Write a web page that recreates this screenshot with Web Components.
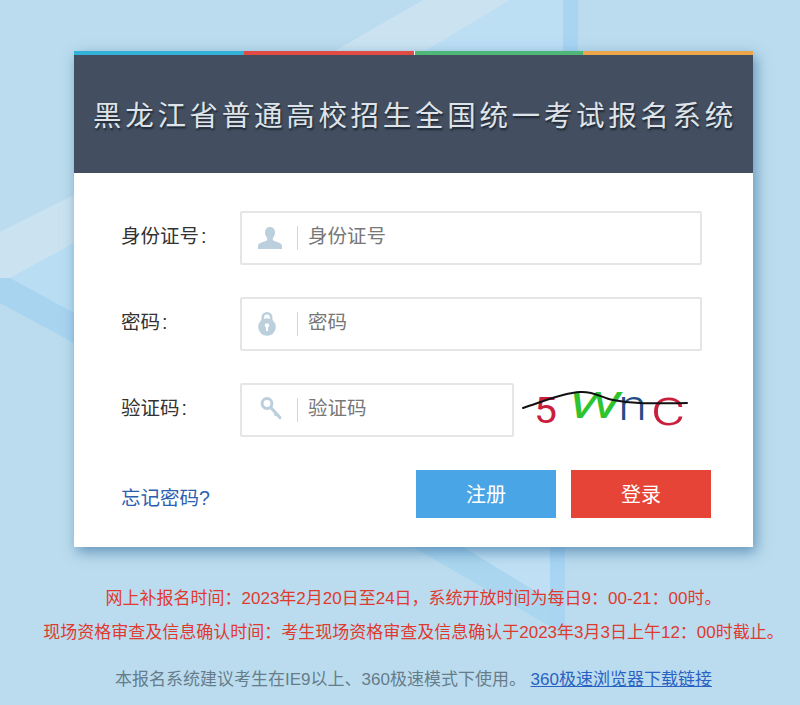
<!DOCTYPE html>
<html lang="zh">
<head>
<meta charset="utf-8">
<title>黑龙江省普通高校招生全国统一考试报名系统</title>
<style>
  html, body { margin: 0; height: 100%; }
  body {
    background: #bbdcee;
    font-family: "Liberation Sans", "Noto Sans CJK SC", sans-serif;
    overflow: hidden;
  }
</style>
</head>
<body>
<page-backdrop></page-backdrop>
<login-page>
  <login-card title-text="黑龙江省普通高校招生全国统一考试报名系统"></login-card>
  <notice-lines></notice-lines>
</login-page>

<script>
const ICONS = {
  user: `<svg width="26" height="26" viewBox="0 0 26 26"><path fill="#bccfdc" d="M13 2c3 0 5 2.200 5 5.400 0 2.400-1 4.400-2.200 5.500v1.500c0 1 1.200 1.600 3.600 2.300 3.200 1 5.600 2 5.600 4.300V24H1v-3c0-2.300 2.400-3.300 5.600-4.300 2.400-.7 3.600-1.300 3.600-2.300v-1.500C9 11.800 8 9.800 8 7.400 8 4.200 10 2 13 2z"/></svg>`,
  lock: `<svg width="26" height="26" viewBox="0 0 26 26"><path fill="none" stroke="#bccfdc" stroke-width="2.600" d="M5.800 12V6.500a4.200 4.200 0 0 1 8.400 0V12"/><circle cx="10" cy="16" r="8.800" fill="#bccfdc"/><circle cx="10" cy="14.500" r="2.200" fill="#fff"/><rect x="9" y="15" width="2" height="5" fill="#fff"/></svg>`,
  key: `<svg width="26" height="26" viewBox="0 0 26 26"><circle cx="10" cy="6.500" r="4.900" fill="none" stroke="#bccfdc" stroke-width="3"/><path fill="none" stroke="#bccfdc" stroke-width="3.200" stroke-linecap="round" d="M13.800 10.500l9 10"/><path fill="none" stroke="#bccfdc" stroke-width="2" d="M19.500 16.500l-2 2"/></svg>`
};

class PageBackdrop extends HTMLElement {
  constructor() {
    super();
    this.attachShadow({mode: "open"}).innerHTML = `
      <style>
        :host { position: absolute; inset: 0; z-index: -1; display: block; }
        svg { display: block; }
      </style>
      <svg width="800" height="705" viewBox="0 0 800 705">
        <defs>
          <linearGradient id="bar" x1="0" y1="0" x2="0" y2="1">
            <stop offset="0" stop-color="#a9d5f3"/>
            <stop offset=".8" stop-color="#a9d5f3"/>
            <stop offset="1" stop-color="#a9d5f3" stop-opacity="0"/>
          </linearGradient>
        </defs>
        <polygon fill="#bcdff4" points="510,0 563,0 563,52 423,52"/>
        <polygon fill="#cbe3f1" points="333,52 423,0 510,0 423,52"/>
        <polygon fill="#a9d5f3" points="563,0 578,0 578,52 563,52"/>
        <polygon fill="#cbe3f1" points="0,232 74,195 74,243 10,278 0,278"/>
        <polygon fill="#b9def3" points="10,278 74,243 74,313"/>
        <polygon fill="#a9d4ef" points="0,278 10,278 74,313 74,343 0,303"/>
        <polygon fill="#bfe0f4" points="463,547 550,547 550,600"/>
        <polygon fill="#aad6ef" points="413,547 463,547 550,600 565,610 565,635"/>
        <polygon fill="url(#bar)" points="550,547 565,547 565,640 550,625"/>
      </svg>`;
  }
}

class LoginPage extends HTMLElement {
  constructor() {
    super();
    this.attachShadow({mode: "open"}).innerHTML = `
      <style>
        :host { display: flex; flex-direction: column; padding: 51px 0 0 0; }
      </style>
      <slot></slot>`;
  }
}

class LoginCard extends HTMLElement {
  constructor() {
    super();
    const title = this.getAttribute("title-text");
    this.attachShadow({mode: "open"}).innerHTML = `
      <style>
        :host {
          display: block;
          width: 679px;
          margin-left: 74px;
          background: #fff;
          box-shadow: 3px 5px 13px rgba(40, 100, 150, .6);
        }
        .stripe { display: flex; height: 4px; }
        .stripe i { flex: 1; }
        .stripe i:nth-child(3) { box-shadow: inset 1px 0 #fff; }
        header {
          height: 118px;
          background: #434e60;
          display: flex;
          align-items: center;
          justify-content: center;
        }
        h1 {
          margin: 0 0 1px 3px;
          color: #dde3e8;
          font: 400 28.500px "Noto Sans CJK SC", sans-serif;
          letter-spacing: 3.700px;
          white-space: nowrap;
          text-shadow: 1px 2px 2px #1d2530;
        }
        form {
          display: flex;
          flex-direction: column;
          gap: 32px;
          padding: 38px 42px 29px 47px;
        }
        .actions {
          display: flex;
          align-items: center;
          gap: 15px;
          margin-top: 1px;
        }
        a {
          font-size: 19.500px;
          color: #2d5fb0;
          text-decoration: none;
          margin: 4px auto 0 0;
        }
        button {
          width: 140px;
          height: 48px;
          border: 0;
          padding: 0 0 2px;
          color: #fff;
          font: 20px "Noto Sans CJK SC", sans-serif;
        }
        .reg { background: #49a5e6; }
        .log { background: #e74438; }
      </style>
      <div class="stripe">
        <i style="background:#33b1d8"></i><i style="background:#e04b43"></i><i style="background:#4fb778"></i><i style="background:#eca549"></i>
      </div>
      <header><h1>${title}</h1></header>
      <form>
        <form-row label="身份证号:" icon="user" placeholder="身份证号"></form-row>
        <form-row label="密码:" icon="lock" placeholder="密码"></form-row>
        <form-row label="验证码:" icon="key" placeholder="验证码" short>
          <captcha-image></captcha-image>
        </form-row>
        <div class="actions">
          <a href="#">忘记密码?</a>
          <button type="button" class="reg">注册</button>
          <button type="button" class="log">登录</button>
        </div>
      </form>`;
  }
}

class FormRow extends HTMLElement {
  constructor() {
    super();
    const short = this.hasAttribute("short");
    const [name, colon] = [this.getAttribute("label").slice(0, -1), this.getAttribute("label").slice(-1)];
    this.attachShadow({mode: "open"}).innerHTML = `
      <style>
        :host { display: flex; align-items: center; height: 54px; }
        label { width: 119px; font-size: 19.500px; color: #333; margin-bottom: 8px; }
        label b { font-weight: 400; margin-left: 2px; }
        .field {
          box-sizing: border-box;
          width: ${short ? 274 : 462}px;
          height: 54px;
          display: flex;
          align-items: center;
          background: #fff;
          border: 2px solid #e3e5e6;
          border-radius: 2px;
          padding-left: 15px;
        }
        .icon { width: 26px; height: 26px; margin-right: 14px; }
        .rule { width: 1px; height: 24px; background: #d3d6d8; margin-right: 10px; }
        .field span {
          font-size: 19.500px;
          color: #777;
          margin-bottom: 8px;
        }
        ::slotted(*) { margin-left: 8px; }
      </style>
      <label>${name}<b>${colon}</b></label>
      <div class="field">
        <div class="icon">${ICONS[this.getAttribute("icon")]}</div>
        <div class="rule"></div>
        <span>${this.getAttribute("placeholder")}</span>
      </div>
      <slot></slot>`;
  }
}

class CaptchaImage extends HTMLElement {
  constructor() {
    super();
    this.attachShadow({mode: "open"}).innerHTML = `
      <style>
        :host { display: block; width: 170px; height: 54px; }
        svg { display: block; margin-top: -10px; }
        text { font-family: Roboto, sans-serif; font-weight: 400; }
        .thin { font-weight: 300; }
      </style>
      <svg width="170" height="74" viewBox="0 -10 170 74">
        <text x="12" y="40" font-size="36" fill="#c8203c" textLength="23" lengthAdjust="spacingAndGlyphs">5</text>
        <text x="46" y="35" font-size="37" fill="#2fc42f" font-style="italic" textLength="52" lengthAdjust="spacingAndGlyphs">W</text>
        <text class="thin" x="96" y="37" font-size="42" fill="#1f4f86" textLength="29" lengthAdjust="spacingAndGlyphs">n</text>
        <text class="thin" x="129" y="42" font-size="52" fill="#c8203c" textLength="34" lengthAdjust="spacingAndGlyphs">c</text>
        <path fill="none" stroke="#111" stroke-width="2" stroke-linecap="round" d="M1 25C20 19 40 10 58 9c14-1 22 6 33 8 16 3 30 4 74 3"/>
      </svg>`;
  }
}

class NoticeLines extends HTMLElement {
  constructor() {
    super();
    this.attachShadow({mode: "open"}).innerHTML = `
      <style>
        :host { display: block; width: 827px; text-align: center; padding-top: 40px; font-size: 17px; white-space: nowrap; }
        p { margin: 0; line-height: 24px; }
        .red { color: #df3a30; }
        .red + .red { margin-top: 10px; }
        .tip { color: #667c8a; margin-top: 23px; }
        a { color: #2a62c4; }
      </style>
      <p class="red">网上补报名时间：2023年2月20日至24日，系统开放时间为每日9：00-21：00时。</p>
      <p class="red">现场资格审查及信息确认时间：考生现场资格审查及信息确认于2023年3月3日上午12：00时截止。</p>
      <p class="tip">本报名系统建议考生在IE9以上、360极速模式下使用。 <a href="#">360极速浏览器下载链接</a></p>`;
  }
}

customElements.define("page-backdrop", PageBackdrop);
customElements.define("login-page", LoginPage);
customElements.define("form-row", FormRow);
customElements.define("captcha-image", CaptchaImage);
customElements.define("login-card", LoginCard);
customElements.define("notice-lines", NoticeLines);
</script>
</body>
</html>
